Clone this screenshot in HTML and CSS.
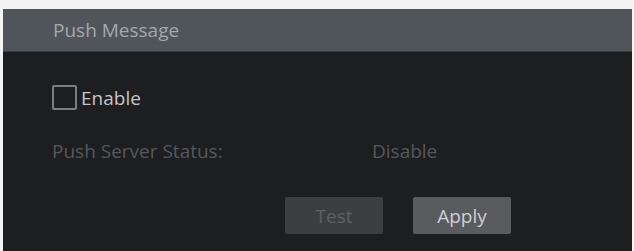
FILE: index.html
```html
<!DOCTYPE html>
<html>
<head>
<meta charset="utf-8">
<link rel="stylesheet" href="styles.css">
</head>
<body>
<div class="panel">
  <div class="header">Push Message</div>
  <div class="content">
    <label class="check-row">
      <span class="checkbox"></span>
      <span class="check-label">Enable</span>
    </label>
    <div class="status-row">
      <span class="status-label">Push Server Status:</span>
      <span class="status-value">Disable</span>
    </div>
    <div class="buttons">
      <button class="btn btn-disabled">Test</button>
      <button class="btn btn-apply">Apply</button>
    </div>
  </div>
</div>
</body>
</html>
```
FILE: styles.css
```css
html, body {
  margin: 0;
  padding: 0;
  background: #f4f4f4;
}
body {
  width: 634px;
  height: 251px;
  overflow: hidden;
  font-family: "Open Sans", "Noto Sans", sans-serif;
}
.panel {
  margin: 9px 0 0 3px;
  width: 629px;
  height: 242px;
  background: #1d1e20;
  display: flex;
  flex-direction: column;
}
.header {
  height: 42px;
  background: #50555c;
  border-bottom: 1px solid #3a3d42;
  color: #a4a8ad;
  font-size: 19px;
  line-height: 42px;
  padding-left: 50px;
}
.content {
  padding: 33px 0 0 49px;
  display: flex;
  flex-direction: column;
}
.check-row {
  display: flex;
  align-items: center;
  height: 25px;
}
.checkbox {
  width: 21px;
  height: 21px;
  border: 2px solid #7d7e80;
  border-radius: 2px;
  box-sizing: content-box;
}
.check-label {
  margin-left: 4px;
  color: #c4c5c7;
  font-size: 19px;
}
.status-row {
  display: flex;
  margin-top: 29px;
  font-size: 19px;
  color: #56585b;
  height: 24px;
  align-items: center;
}
.status-label {
  width: 320px;
}
.buttons {
  display: flex;
  gap: 30px;
  margin-top: 34px;
  margin-left: 233px;
}
.btn {
  width: 98px;
  height: 37px;
  border: none;
  border-radius: 2px;
  font-family: "Open Sans", "Noto Sans", sans-serif;
  font-size: 19px;
  padding: 0;
}
.btn-disabled {
  background: #3d3e40;
  color: #5f6063;
}
.btn-apply {
  background: #595b5e;
  color: #cfd0d2;
}
```
